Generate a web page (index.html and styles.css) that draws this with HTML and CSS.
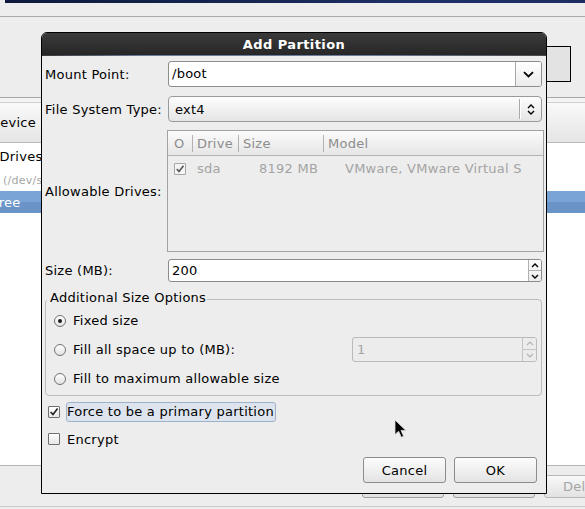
FILE: index.html
```html
<!DOCTYPE html>
<html>
<head>
<meta charset="utf-8">
<title>Add Partition</title>
<link rel="stylesheet" href="styles.css">
</head>
<body>
<div class="screen">
  <div class="topband"></div>
  <div class="topline"></div>
  <div class="heading">
    <div class="heading-text">Please select the drive you would like to install to</div>
    <div class="bgbox"></div>
  </div>
  <div class="tree">
    <div class="tree-head"><span class="th-text">Device</span></div>
    <div class="tree-body">
      <div class="brow brow-drives"><span>Hard Drives</span></div>
      <div class="brow brow-dev"><span>(/dev/sda)</span></div>
      <div class="brow brow-sel"><span>Free</span></div>
    </div>
  </div>
  <div class="footer">
    <div class="bg-buttons">
      <span class="bgbtn">Create</span>
      <span class="bgbtn">Edit</span>
      <span class="bgbtn bgbtn-dis">Delete</span>
    </div>
    <div class="footer-line"></div>
  </div>
</div>

<div class="dialog">
  <div class="titlebar">Add Partition</div>
  <div class="title-line"></div>
  <div class="content">
    <div class="frow row-mount">
      <span class="flabel">Mount Point:</span>
      <div class="combo-entry">
        <span class="ce-text">/boot</span>
        <span class="ce-btn"><svg width="11" height="7" viewBox="0 0 11 7"><path d="M1 1.2 L5.5 5.5 L10 1.2" fill="none" stroke="#000" stroke-width="1.8"/></svg></span>
      </div>
    </div>
    <div class="frow row-fs">
      <span class="flabel">File System Type:</span>
      <div class="combo">
        <span class="combo-text">ext4</span>
        <span class="combo-sep"></span>
        <span class="combo-arrows"><svg width="8" height="13" viewBox="0 0 8 13"><path d="M1 5 L4 2 L7 5 M1 8 L4 11 L7 8" fill="none" stroke="#000" stroke-width="1.4"/></svg></span>
      </div>
    </div>
    <div class="frow row-drives">
      <span class="flabel">Allowable Drives:</span>
      <div class="tv">
        <div class="tv-head">
          <span class="c c0">O</span>
          <span class="c">Drive</span>
          <span class="c">Size</span>
          <span class="c">Model</span>
        </div>
        <div class="tv-row">
          <span class="t0"><span class="tv-check"><svg width="10" height="10" viewBox="0 0 10 10"><path d="M1.8 5 L4 7.5 L8.5 1.8" fill="none" stroke="#555" stroke-width="1.6"/></svg></span></span>
          <span class="t1">sda</span>
          <span class="t2">8192 MB</span>
          <span class="t3">VMware, VMware Virtual S</span>
        </div>
      </div>
    </div>
    <div class="frow row-size">
      <span class="flabel">Size (MB):</span>
      <div class="spin">
        <span class="spin-text">200</span>
        <span class="spin-btns">
          <span class="sb"><svg width="8" height="5" viewBox="0 0 8 5"><path d="M1 4 L4 1 L7 4" fill="none" stroke="#000" stroke-width="1.4"/></svg></span>
          <span class="sb sb-down"><svg width="8" height="5" viewBox="0 0 8 5"><path d="M1 1 L4 4 L7 1" fill="none" stroke="#000" stroke-width="1.4"/></svg></span>
        </span>
      </div>
    </div>
    <div class="frame">
      <span class="legend">Additional Size Options</span>
      <div class="ropt"><span class="radio radio-on"></span><span>Fixed size</span></div>
      <div class="ropt"><span class="radio"></span><span>Fill all space up to (MB):</span>
        <div class="spin spin-dis">
          <span class="spin-text">1</span>
          <span class="spin-btns">
            <span class="sb"><svg width="8" height="5" viewBox="0 0 8 5"><path d="M1 4 L4 1 L7 4" fill="none" stroke="#b4b4b4" stroke-width="1.2"/></svg></span>
            <span class="sb sb-down"><svg width="8" height="5" viewBox="0 0 8 5"><path d="M1 1 L4 4 L7 1" fill="none" stroke="#b4b4b4" stroke-width="1.2"/></svg></span>
          </span>
        </div>
      </div>
      <div class="ropt"><span class="radio"></span><span>Fill to maximum allowable size</span></div>
    </div>
    <div class="crow row-force">
      <span class="check"><svg width="10" height="10" viewBox="0 0 10 10"><path d="M1.6 5 L4 7.6 L8.6 1.6" fill="none" stroke="#222" stroke-width="1.6"/></svg></span>
      <span class="focus-label">Force to be a primary partition</span>
    </div>
    <div class="crow row-encrypt">
      <span class="check"></span>
      <span class="plain-label">Encrypt</span>
    </div>
    <div class="btnrow">
      <span class="btn">Cancel</span>
      <span class="btn">OK</span>
    </div>
  </div>
</div>

<svg class="cursor" width="14" height="20" viewBox="0 0 14 20"><path d="M1 1 L1 15.5 L4.6 12.2 L7.3 18.2 L9.6 17.2 L7 11.4 L11.8 11.4 Z" fill="#000" stroke="#ddd" stroke-width="0.8"/></svg>
</body>
</html>
```

FILE: styles.css
```css
html, body {
  margin: 0;
  padding: 0;
}
body {
  width: 585px;
  height: 509px;
  overflow: hidden;
  position: relative;
  background: #ededed;
  font-family: "DejaVu Sans", "Noto Sans", sans-serif;
  font-size: 13px;
  letter-spacing: 0.25px;
  color: #000;
}

/* ---------- background installer screen ---------- */
.screen {
  height: 509px;
}
.topband {
  height: 3px;
  margin-left: 5px;
  background: linear-gradient(90deg, #0d1a3d, #15254f 40%, #1d3068 70%, #1b2d63);
}
.topline {
  margin-top: 13px;
  height: 1px;
  background: #a9a9a9;
}
.heading {
  height: 80px;
  box-sizing: border-box;
  padding-top: 13px;
}
.heading-text {
  margin-left: 85px;
  font-weight: bold;
  line-height: 16px;
  white-space: nowrap;
}
.bgbox {
  margin: 0 0 0 501px;
  width: 70px;
  height: 36px;
  box-sizing: border-box;
  border: 1px solid #000;
  background: #e3e3e3;
}
.tree {
  border-top: 1px solid #a8a8a8;
  background: #f3f3f3;
  padding-top: 4px;
  overflow: hidden;
}
.tree-head {
  height: 41px;
  box-sizing: border-box;
  border-top: 1px solid #d0d0d0;
  border-bottom: 1px solid #b9b9b9;
  background: linear-gradient(#f9f9f9, #e5e5e5);
  display: flex;
  align-items: center;
}
.th-text {
  margin-left: -10px;
}
.tree-body {
  height: 322px;
  background: #fff;
  border-bottom: 1px solid #b5b5b5;
}
.brow {
  display: flex;
  align-items: center;
  white-space: nowrap;
}
.brow-drives {
  height: 26px;
}
.brow-drives span {
  margin-left: -37px;
}
.brow-dev {
  height: 22px;
  font-size: 11px;
  color: #a6a6a6;
}
.brow-dev span {
  margin-left: 3px;
}
.brow-sel {
  height: 22px;
  color: #fff;
  background: linear-gradient(#7ba4d6 0, #7ba4d6 50%, #6a94c8 50%, #6a94c8 100%);
}
.brow-sel span {
  margin-left: -8px;
}
.footer {
  padding-top: 9px;
}
.bg-buttons {
  display: flex;
  gap: 9px;
  margin-left: 362px;
  height: 23px;
}
.bgbtn {
  flex: none;
  width: 82px;
  height: 23px;
  box-sizing: border-box;
  border: 1px solid #a0a0a0;
  border-radius: 3px;
  background: linear-gradient(#f8f8f8, #e2e2e2);
  display: flex;
  align-items: center;
  justify-content: center;
}
.bgbtn-dis {
  color: #a5a5a5;
  border-color: #b8b8b8;
}
.footer-line {
  margin-top: 8px;
  height: 1px;
  background: #c9c9c9;
}

/* ---------- dialog ---------- */
.dialog {
  position: absolute;
  left: 41px;
  top: 32px;
  width: 506px;
  height: 462px;
  box-sizing: border-box;
  border: 1px solid #000;
  border-radius: 6px 6px 0 0;
  background: #ededed;
  overflow: hidden;
}
.titlebar {
  height: 20px;
  padding-top: 2px;
  line-height: 20px;
  text-align: center;
  font-weight: bold;
  letter-spacing: 0.4px;
  color: #fff;
  background: linear-gradient(#3a3a3a, #303030 55%, #262626);
}
.title-line {
  height: 1px;
  background: linear-gradient(90deg, #3a3a3a, #6c7d9c 20%, #6c7d9c 65%, #4a4a4a);
}
.content {
  padding: 0 4px 0 3px;
}
.frow {
  display: grid;
  grid-template-columns: 123px 1fr;
  align-items: center;
}
.flabel {
  white-space: nowrap;
}
.row-mount {
  margin-top: 5px;
  height: 26px;
}
.row-fs {
  margin-top: 9px;
  height: 26px;
}
.row-drives {
  margin-top: 8px;
  height: 122px;
}
.row-size {
  margin-top: 7px;
  height: 23px;
}

.combo-entry {
  height: 26px;
  box-sizing: border-box;
  border: 1px solid #8e8e8e;
  border-radius: 3px;
  background: #fff;
  display: flex;
}
.ce-text {
  flex: 1;
  padding-left: 3px;
  line-height: 24px;
}
.ce-btn {
  width: 25px;
  border-left: 1px solid #a9a9a9;
  border-radius: 0 2px 2px 0;
  background: linear-gradient(#ffffff, #ebebeb);
  display: flex;
  align-items: center;
  justify-content: center;
}

.combo {
  height: 26px;
  box-sizing: border-box;
  border: 1px solid #9a9a9a;
  border-radius: 4px;
  background: linear-gradient(#fdfdfd, #e5e5e5);
  display: flex;
  align-items: center;
}
.combo-text {
  flex: 1;
  padding-left: 6px;
}
.combo-sep {
  width: 1px;
  height: 20px;
  background: #a9a9a9;
  box-shadow: 1px 0 0 #fff;
}
.combo-arrows {
  width: 21px;
  display: flex;
  align-items: center;
  justify-content: center;
}

/* tree view of drives */
.tv {
  margin: 0 -2px 0 -1px;
  height: 122px;
  box-sizing: border-box;
  border: 1px solid #a2a2a2;
  background: #ededed;
  overflow: hidden;
}
.tv-head,
.tv-row {
  display: grid;
  grid-template-columns: 24px 46px 85px 1fr;
  align-items: center;
}
.tv-head {
  height: 24px;
  border-bottom: 1px solid #b4b4b4;
  background: linear-gradient(#fbfbfb, #e6e6e6);
  color: #8d8d8d;
}
.tv-head .c {
  height: 17px;
  line-height: 17px;
  padding-left: 4px;
  border-left: 1px solid #b2b2b2;
  white-space: nowrap;
}
.tv-head .c0 {
  border-left: 0;
  padding-left: 6px;
}
.tv-row {
  height: 25px;
  color: #a4a4a4;
  white-space: nowrap;
}
.t0 {
  display: flex;
  padding-left: 6px;
}
.tv-check {
  width: 12px;
  height: 12px;
  box-sizing: border-box;
  border: 1px solid #a6a6a6;
  border-radius: 1px;
  background: #f4f4f4;
  display: flex;
  align-items: center;
  justify-content: center;
}
.t1 {
  padding-left: 5px;
}
.t2 {
  padding-left: 21px;
}
.t3 {
  padding-left: 22px;
  padding-right: 14px;
  overflow: hidden;
}

/* spin buttons */
.spin {
  height: 23px;
  box-sizing: border-box;
  border: 1px solid #8b8b8b;
  border-radius: 3px;
  background: #fff;
  display: flex;
}
.spin-text {
  flex: 1;
  padding-left: 3px;
  line-height: 21px;
}
.spin-btns {
  width: 12px;
  border-left: 1px solid #b0b0b0;
  display: flex;
  flex-direction: column;
  background: linear-gradient(#fdfdfd, #ececec);
  border-radius: 0 2px 2px 0;
}
.sb {
  flex: 1;
  display: flex;
  align-items: center;
  justify-content: center;
}
.sb-down {
  border-top: 1px solid #b0b0b0;
}
.spin-dis {
  margin-left: auto;
  margin-right: 4px;
  width: 185px;
  height: 25px;
  border-color: #bababa;
  background: #ececec;
  color: #a5a5a5;
}
.spin-dis .spin-text {
  padding-left: 4px;
  line-height: 23px;
}
.spin-dis .spin-btns {
  width: 13px;
  background: #ececec;
  border-left-color: #c4c4c4;
}
.spin-dis .sb-down {
  border-top-color: #c4c4c4;
}

/* frame */
.frame {
  position: relative;
  margin-top: 17px;
  border: 1px solid #bcbcbc;
  border-radius: 4px;
  padding: 6px 0 2px 0;
}
.legend {
  position: absolute;
  top: -10px;
  left: 1px;
  padding: 0 1px 0 3px;
  line-height: 16px;
  background: #ededed;
}
.ropt {
  display: flex;
  align-items: center;
  height: 29px;
  padding-left: 8px;
  gap: 7px;
  white-space: nowrap;
}
.radio {
  flex: none;
  width: 12px;
  height: 12px;
  box-sizing: border-box;
  border: 1px solid #727272;
  border-radius: 50%;
  background: linear-gradient(#ffffff, #e2e2e2);
  display: flex;
  align-items: center;
  justify-content: center;
}
.radio-on::after {
  content: "";
  width: 4px;
  height: 4px;
  border-radius: 50%;
  background: #1a1a1a;
}

/* checkboxes */
.crow {
  display: flex;
  align-items: center;
  height: 20px;
  padding-left: 3px;
  white-space: nowrap;
}
.row-force {
  margin-top: 6px;
}
.row-encrypt {
  margin-top: 7px;
}
.check {
  flex: none;
  width: 12px;
  height: 12px;
  box-sizing: border-box;
  border: 1px solid #707070;
  border-radius: 1px;
  background: linear-gradient(#ffffff, #e6e6e6);
  display: flex;
  align-items: center;
  justify-content: center;
}
.focus-label {
  margin-left: 6px;
  height: 20px;
  box-sizing: border-box;
  line-height: 18px;
  padding-right: 1px;
  border: 1px solid #9db1c9;
  border-radius: 3px;
  background: #dde4ed;
}
.plain-label {
  margin-left: 7px;
}

/* dialog buttons */
.btnrow {
  margin-top: 8px;
  display: flex;
  justify-content: flex-end;
  gap: 8px;
  padding-right: 5px;
}
.btn {
  width: 83px;
  height: 26px;
  box-sizing: border-box;
  border: 1px solid #8c8c8c;
  border-radius: 3px;
  background: linear-gradient(#fdfdfd, #e3e3e3);
  display: flex;
  align-items: center;
  justify-content: center;
}

/* mouse pointer on top of everything */
.cursor {
  position: absolute;
  left: 394px;
  top: 419px;
}
```
